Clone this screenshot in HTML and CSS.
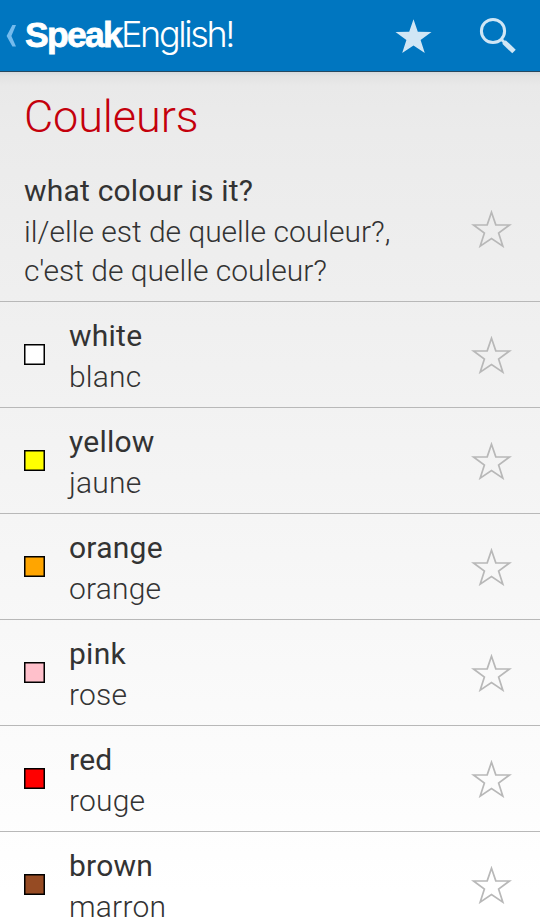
FILE: index.html
```html
<!DOCTYPE html>
<html lang="fr">
<head>
<meta charset="utf-8">
<title>SpeakEnglish!</title>
<link rel="stylesheet" href="styles.css">
</head>
<body>
<svg class="defs" width="0" height="0"><symbol id="star" viewBox="0 0 40 38"><path d="M20 2.2 24.3 14.8 38 15 27.1 23.1 31.3 36.1 20 28.5 8.7 36.1 12.9 23.1 2 15 15.7 14.8Z"/></symbol></svg>
<header class="bar">
  <svg class="back" viewBox="0 0 10 22"><path d="M6.400 0H10L5.400 11 10 21.600H6.400L.6 11Z"/></svg>
  <h1 class="logo"><span class="speak">Speak</span><span class="english">English!</span></h1>
  <svg class="fav" viewBox="0 0 40 38"><use href="#star"/></svg>
  <svg class="search" viewBox="0 0 38 38"><circle cx="14" cy="14" r="11.600"/><path class="neck" d="M22 22 26 26"/><path class="handle" d="M25 25 35 34.500"/></svg>
</header>
<main class="page">
  <h2 class="heading">Couleurs</h2>
  <ul class="list">
    <li class="row question"><div class="words"><b>what colour is it?</b><p>il/elle est de quelle couleur?, c'est de quelle couleur?</p></div><svg class="star"><use href="#star"/></svg></li>
    <li class="row"><i class="swatch white"></i><div class="words"><b>white</b><p>blanc</p></div><svg class="star"><use href="#star"/></svg></li>
    <li class="row"><i class="swatch yellow"></i><div class="words"><b>yellow</b><p>jaune</p></div><svg class="star"><use href="#star"/></svg></li>
    <li class="row"><i class="swatch orange"></i><div class="words"><b>orange</b><p>orange</p></div><svg class="star"><use href="#star"/></svg></li>
    <li class="row"><i class="swatch pink"></i><div class="words"><b>pink</b><p>rose</p></div><svg class="star"><use href="#star"/></svg></li>
    <li class="row"><i class="swatch red"></i><div class="words"><b>red</b><p>rouge</p></div><svg class="star"><use href="#star"/></svg></li>
    <li class="row"><i class="swatch brown"></i><div class="words"><b>brown</b><p>marron</p></div><svg class="star"><use href="#star"/></svg></li>
  </ul>
</main>
</body>
</html>
```
FILE: styles.css
```css
* { box-sizing: border-box; margin: 0; padding: 0; }
body { height: 922px; overflow: hidden; display: flex; flex-direction: column; font-family: Roboto, sans-serif; color: #333; background: #fff; }
.defs { position: absolute; }
.bar { flex: none; height: 72px; display: flex; align-items: flex-start; background: #0076c0; border-bottom: 1px solid #26485f; padding-left: 6px; }
.back { width: 10px; height: 22px; margin-top: 25px; fill: #74bbed; }
.logo { width: 377px; margin: 13px 0 0 9px; font-size: 36px; line-height: 42px; color: #fff; white-space: nowrap; }
.speak { font-family: "Liberation Sans", sans-serif; font-weight: 700; font-size: 35.5px; letter-spacing: -1.7px; -webkit-text-stroke: .8px #fff; }
.english { font-family: Inter, sans-serif; font-weight: 300; font-size: 36px; letter-spacing: -2.4px; }
.fav { flex: none; width: 41px; height: 38px; margin: 17px 0 0 -9px; fill: #d0e6f5; }
.search { flex: none; width: 38px; height: 38px; margin: 17px 0 0 45px; fill: none; stroke: #d0e6f5; stroke-width: 3; }
.search .handle { stroke-width: 5; }
.page { flex: 1; min-height: 0; background: linear-gradient(#d6dadd 0, #e3e3e3 4px, #e9e9e9 14px, #ebebeb 60px, #efefef 220px, #fff 820px); }
.heading { height: 93px; padding: 18px 24px 0; font-size: 45px; line-height: 53px; font-weight: 300; letter-spacing: -.1px; color: #c4000c; }
.list { list-style: none; }
.row { height: 106px; display: flex; align-items: center; padding: 0 28px 0 24px; border-bottom: 1px solid #b8b8b8; }
.row:last-child { border-bottom: 0; }
.question { height: 137px; padding-bottom: 8px; }
.swatch { width: 21px; height: 21px; margin-right: 24px; border: 1px solid #000; box-shadow: inset 0 0 0 .5px #000; }
.white { background: #fff; }
.yellow { background: #ff0; }
.orange { background: #ffa500; }
.pink { background: #ffc0cb; }
.red { background: #f00; }
.brown { background: #964b23; }
.words { flex: 1; padding-top: 2px; font-size: 30px; }
.words b { display: block; font-weight: 400; line-height: 41px; letter-spacing: .25px; }
.words p { max-width: 400px; padding-top: 1px; font-weight: 300; line-height: 39px; letter-spacing: .2px; }
.row:last-child { height: 105px; }
.question b { letter-spacing: .2px; }
.question p { letter-spacing: 0; }
.star { width: 41px; height: 38px; fill: none; stroke: #b8b8b8; stroke-width: 1.7; }
```
